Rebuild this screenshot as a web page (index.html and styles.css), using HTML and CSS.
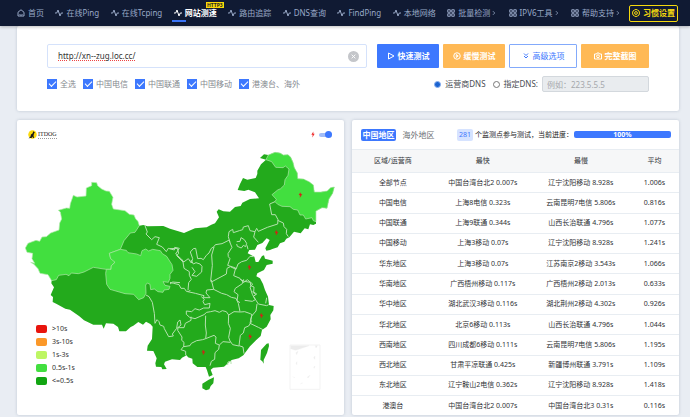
FILE: index.html
```html
<!DOCTYPE html>
<html lang="zh-CN">
<head>
<meta charset="utf-8">
<title>网站测速 - ITDOG</title>
<link rel="stylesheet" href="styles.css">
</head>
<body>
<svg class="defs" aria-hidden="true">
  <symbol id="home" viewBox="0 0 16 16"><path d="M2 6.5 8 1.500l6 5V14H2zM5 11c1.500 1.500 4.500 1.500 6 0"/></symbol>
  <symbol id="pulse" viewBox="0 0 16 16"><path d="M0 8h3.500L6 2l4 12 2.500-6H16"/></symbol>
  <symbol id="grid" viewBox="0 0 16 16"><path d="M1.500 1.500h5v5h-5zM9.500 1.500h5v5h-5zM1.500 9.500h5v5h-5zM9.500 9.500h5v5h-5z"/></symbol>
  <symbol id="chevron" viewBox="0 0 16 16"><path d="m5 3 5 5-5 5"/></symbol>
  <symbol id="gear" viewBox="0 0 16 16"><path d="M5 2 8 .8 11 2l3 2 1 4-1 4-3 2-3 1.200L5 14l-3-2-1-4 1-4z"/><circle cx="8" cy="8" r="2.800"/></symbol>
  <symbol id="bolt" viewBox="0 0 12 18"><path d="M7 0 1 10h4l-1 8 7-11H7z"/></symbol>
</svg>

<header class="topbar">
  <nav class="nav">
    <a href="#"><svg class="icon"><use href="#home"/></svg>首页</a>
    <a href="#"><svg class="icon"><use href="#pulse"/></svg>在线Ping</a>
    <a href="#"><svg class="icon"><use href="#pulse"/></svg>在线Tcping</a>
    <a href="#" class="active"><svg class="icon"><use href="#pulse"/></svg>网站测速<span class="tag">HTTP3</span></a>
    <a href="#"><svg class="icon"><use href="#pulse"/></svg>路由追踪</a>
    <a href="#"><svg class="icon"><use href="#pulse"/></svg>DNS查询</a>
    <a href="#"><svg class="icon"><use href="#pulse"/></svg>FindPing</a>
    <a href="#"><svg class="icon"><use href="#pulse"/></svg>本地网络</a>
    <a href="#"><svg class="icon"><use href="#grid"/></svg>批量检测<svg class="icon small"><use href="#chevron"/></svg></a>
    <a href="#"><svg class="icon"><use href="#grid"/></svg>IPV6工具<svg class="icon small"><use href="#chevron"/></svg></a>
    <a href="#"><svg class="icon"><use href="#grid"/></svg>帮助支持<svg class="icon small"><use href="#chevron"/></svg></a>
  </nav>
  <button class="settings" type="button"><svg class="icon"><use href="#gear"/></svg>习惯设置</button>
</header>

<main class="page">
  <form class="card query">
    <div class="row">
      <div class="url">
        <input type="text" aria-label="网址" value="http://xn--zug.loc.cc/" spellcheck="false">
        <button class="clear" type="button" aria-label="清空"><svg viewBox="0 0 12 12"><circle cx="6" cy="6" r="6"/><path d="m4 4 4 4m0-4-4 4"/></svg></button>
      </div>
      <div class="actions">
        <button class="btn blue" type="button"><svg class="icon" viewBox="0 0 16 16"><path d="M3 2v12l11-6z"/></svg>快速测试</button>
        <button class="btn orange" type="button"><svg class="icon" viewBox="0 0 16 16"><circle cx="8" cy="8" r="6.500"/><path d="M6.500 5v6l4-3z"/></svg>缓慢测试</button>
        <button class="btn outline wide" type="button"><svg class="icon" viewBox="0 0 16 16"><path d="m4 3 4 4 4-4M4 8l4 4 4-4"/></svg>高级选项</button>
        <button class="btn orange wide" type="button"><svg class="icon" viewBox="0 0 16 16"><path d="M1 4h4l1-2h4l1 2h4v10H1z"/><circle cx="8" cy="8.500" r="2.800"/></svg>完整截图</button>
      </div>
    </div>
    <div class="row options">
      <div class="checks">
        <label><input type="checkbox" checked>全选</label>
        <label><input type="checkbox" checked>中国电信</label>
        <label><input type="checkbox" checked>中国联通</label>
        <label><input type="checkbox" checked>中国移动</label>
        <label><input type="checkbox" checked>港澳台、海外</label>
      </div>
      <div class="dns">
        <label><input type="radio" name="dns" checked>运营商DNS</label>
        <label><input type="radio" name="dns">指定DNS:</label>
        <input class="dns-ip" type="text" aria-label="DNS地址" placeholder="例如：223.5.5.5" disabled>
      </div>
    </div>
  </form>

  <div class="results">
    <section class="card map-card">
      <div class="map-head">
        <div class="logo">
          <svg viewBox="0 0 18 18"><circle cx="9" cy="9" r="8.500" fill="#fbd90b"/><path d="M11 2l1 2 2 1-2 2-1 4 1 5h-2l-1-3-2 3H4l-3 1 4-4 1-4 3-2z" fill="#191919"/></svg>
          <span>ITDOG</span>
        </div>
        <div class="live">
          <svg class="bolt"><use href="#bolt"/></svg>
          <input type="checkbox" role="switch" aria-label="实时标记" checked>
        </div>
      </div>
      <svg class="map" viewBox="21 15 981 885" role="img" aria-label="中国地图">
        <path class="fast" d="M388 332 400 330 412 334 460 333 480 341 510 350 522 354 555 340 590 337 604 329 615 325 627 307 620 290 626 283 640 289 660 290 675 276 692 273 697 263 720 252 747 250 735 232 715 224 703 228 683 225 690 207 699 189 712 194 737 189 742 177 742 167 753 148 768 134 750 129 762 118 775 120 795 112 810 114 820 120 834 119 842 127 849 142 853 158 862 174 863 191 880 192 897 200 910 210 913 231 933 231 952 228 962 218 973 216 968 235 957 252 951 280 936 278 918 288 918 326 910 330 900 328 895 343 884 340 872 355 852 350 838 367 829 371 823 380 810 385 803 397 787 402 780 405 769 407 766 400 779 375 770 370 757 384 742 390 735 404 718 405 713 415 733 425 737 441 745 441 756 423 762 421 765 431 780 435 788 437 788 446 770 450 762 465 742 475 739 484 750 490 759 507 765 525 774 545 777 570 791 573 790 586 781 600 782 613 770 635 756 645 752 663 738 676 720 694 700 721 686 730 665 735 642 755 610 758 602 764 608 780 597 785 591 766 587 756 562 756 548 745 547 731 534 727 530 721 516 728 510 735 486 733 465 740 462 748 470 762 457 763 454 756 438 755 436 745 440 730 430 708 411 707 413 692 426 672 428 635 421 627 408 620 399 629 385 621 370 632 362 636 348 649 328 649 324 636 310 626 288 625 281 641 276 629 250 629 222 616 208 604 180 584 166 581 140 567 128 561 129 546 122 540 132 517 124 505 125 497 145 480 250 450 300 400Z"/>
        <path class="mid" d="M245 202 260 203 263 212 275 222 288 228 298 229 309 247 305 268 310 282 345 287 358 298 372 300 377 312 384 319 388 332 375 352 361 354 342 377 331 403 298 415 302 431 310 434 315 442 304 452 303 463 288 463 250 457 222 471 205 476 184 474 177 482 168 478 146 481 139 494 125 497 114 479 90 475 84 461 71 447 62 442 74 445 66 431 68 415 51 412 46 399 54 385 78 376 89 379 96 366 109 365 122 354 147 345 149 324 155 312 151 291 145 286 169 279 179 280 181 266 190 241 201 246 228 243 229 219 245 212Z"/>
        <path class="mid" d="M331 403 349 406 354 413 380 417 392 422 396 407 407 402 416 408 428 403 451 407 457 416 470 424 486 449 489 466 480 478 480 490 475 502 459 500 465 511 480 514 477 523 462 525 459 532 444 530 433 522 422 524 420 508 412 504 407 510 408 535 401 548 386 554 371 538 345 536 300 523 290 508 287 475 289 463 303 463 304 452 315 442 302 431 298 415Z"/>
        <path class="mid" d="M768 134 775 120 795 112 810 114 820 120 834 119 842 127 849 142 853 158 862 174 863 191 880 192 897 200 910 210 913 231 933 231 952 228 962 218 973 216 968 235 957 252 951 280 936 278 918 288 918 320 910 317 906 308 887 312 880 300 870 300 863 285 850 283 840 275 816 274 803 268 795 260 799 253 786 239 803 225 812 221 823 210 825 194 834 181 837 162 826 153 819 158 797 157 785 140Z"/>
        <path class="fast" d="M596 794 612 787 610 805 602 813 598 823 588 826 577 820 577 806ZM770 686 776 685 777 693 771 714 761 735 761 746 757 739 751 734 753 705Z"/>
        <g class="lines">
          <path d="M405 332 412 351 408 357 425 374 435 365 448 368 440 388 457 396 469 410 475 400 493 405 494 397 508 400 497 417 515 433 521 441 535 431 544 444 548 431 541 411 550 401 557 400 563 431 573 430 580 434 589 421 597 414 604 400 612 395 616 389 636 386 658 375 660 383 655 365 657 350 668 343 670 353 688 347 698 344 700 336 715 332 720 347 735 350 731 366 745 382M735 350 740 340 745 349 772 337 803 327 804 314 796 299 785 299 779 267 795 260M803 316 820 324 822 335 830 343 829 356 835 365"/>
          <path d="M680 380 690 379 693 368 703 374 710 385 707 395 700 391 694 399 682 394 680 387M711 391 714 403M660 383 666 397 654 416 655 425 660 431 653 451M480 401 502 400 506 415 500 422 519 441 522 460 538 470 538 481 544 493 536 503 534 526M612 396 605 420 607 451 602 497 604 501 649 477 651 460 661 455 678 463 684 447 695 440 710 436 720 424 731 425M653 451 677 459 671 482 690 490 700 503 712 494 728 507 720 516 727 538 736 554 727 559 704 556"/>
          <path d="M604 495 611 523 635 535 650 539 664 547 678 550 685 565 690 590M701 493 697 506 676 520 672 530 684 539 681 557 690 563M690 493 703 499 721 502 722 512 732 516 731 531 740 537 730 544 738 556 745 567 770 572 776 569M741 567 738 588 725 603 720 625 745 637 759 644M770 548 767 565M611 523 590 525 588 534 600 548 580 548 582 542 556 535 529 529 523 520 513 520 507 509 491 505 480 502"/>
          <path d="M541 525 535 531M574 545 583 553 579 560 584 569 600 565 598 579 581 579 568 585 561 583 555 581 545 590 529 588 529 598 539 607 555 611 582 599 590 592 602 590 615 587 628 592 637 587 649 590 656 600 672 590 691 591 704 590 721 596 726 599 722 615 725 619 716 633 704 638 700 654 691 661 687 692 699 696 702 716M656 600 655 625 661 640 656 667 660 678 668 689 687 693M587 602 586 630 589 654 587 671 578 674 560 677 544 685 540 692 521 695 522 682 515 676 516 666 503 646 504 638 522 638 526 625 543 616 543 605"/>
          <path d="M510 615 503 621 500 640 487 657 490 663 476 665 463 641 461 634 450 630 447 620 441 614 435 625 433 595 427 562 417 545 408 540M587 671 612 661 618 666 616 685 628 690 639 680 661 682M628 690 626 703 615 713 614 733 604 739 600 752M543 435 550 447 558 443 570 447 576 454 575 471 560 484 546 481 555 470 546 457M521 441 515 433M480 507 488 501 510 503M521 694 513 704 527 709 527 721M510 615 513 630 501 640M653 750 654 741 663 739 663 747M727 530 737 539"/>
        </g>
        <g class="marks"><path d="m871 233-4 7h4l-1 7 6-9h-4zM799 346l-4 7h4l-1 7 6-9h-4zM718 450l-4 7h4l-1 7 6-9h-4zM754 595l-4 7h4l-1 7 6-9h-4zM720 658l-4 7h4l-1 7 6-9h-4zM580 705l-4 7h4l-1 7 6-9h-4z"/></g>
        <path class="inset-box" d="M840 690h90v133h-90z"/>
        <path class="inset" d="M842 692h55l-22 8-18 6-15-5zM916 692h6l-4 7zM858 713l6-4-4 10zM911 728l4-5-1 10zM858 744l3-4-1 9zM911 756l4-3-2 7zM892 786l8-5-6 8zM850 785l4 4zM872 806l6-2z"/>
      </svg>
      <ul class="legend">
        <li><i class="c1"></i>&gt;10s</li>
        <li><i class="c2"></i>3s-10s</li>
        <li><i class="c3"></i>1s-3s</li>
        <li><i class="c4"></i>0.5s-1s</li>
        <li><i class="c5"></i>&lt;=0.5s</li>
      </ul>
    </section>

    <section class="card stats">
      <div class="stats-head">
        <button class="tab on" type="button">中国地区</button>
        <button class="tab" type="button">海外地区</button>
        <div class="summary">
          <span class="count">281</span>
          <span>个监测点参与测试，当前进度：</span>
        </div>
        <div class="progress" role="progressbar" aria-valuenow="100">100%</div>
      </div>
      <div class="table-wrap">
        <table>
          <thead><tr><th class="w25">区域/运营商</th><th class="w30">最快</th><th class="w30">最慢</th><th>平均</th></tr></thead>
          <tbody>
            <tr><td>全部节点</td><td>中国台湾台北2 0.007s</td><td>辽宁沈阳移动 8.928s</td><td>1.006s</td></tr>
            <tr><td>中国电信</td><td>上海8电信 0.323s</td><td>云南昆明7电信 5.806s</td><td>0.816s</td></tr>
            <tr><td>中国联通</td><td>上海9联通 0.344s</td><td>山西长治联通 4.796s</td><td>1.077s</td></tr>
            <tr><td>中国移动</td><td>上海3移动 0.07s</td><td>辽宁沈阳移动 8.928s</td><td>1.241s</td></tr>
            <tr><td>华东地区</td><td>上海3移动 0.07s</td><td>江苏南京2移动 3.543s</td><td>1.066s</td></tr>
            <tr><td>华南地区</td><td>广西梧州移动 0.117s</td><td>广西梧州2移动 2.013s</td><td>0.633s</td></tr>
            <tr><td>华中地区</td><td>湖北武汉3移动 0.116s</td><td>湖北荆州2移动 4.302s</td><td>0.926s</td></tr>
            <tr><td>华北地区</td><td>北京6移动 0.113s</td><td>山西长治联通 4.796s</td><td>1.044s</td></tr>
            <tr><td>西南地区</td><td>四川成都6移动 0.111s</td><td>云南昆明7电信 5.806s</td><td>1.195s</td></tr>
            <tr><td>西北地区</td><td>甘肃平凉联通 0.425s</td><td>新疆博州联通 3.791s</td><td>1.109s</td></tr>
            <tr><td>东北地区</td><td>辽宁鞍山2电信 0.362s</td><td>辽宁沈阳移动 8.928s</td><td>1.418s</td></tr>
            <tr><td>港澳台</td><td>中国台湾台北2 0.007s</td><td>中国台湾台北3 0.31s</td><td>0.116s</td></tr>
          </tbody>
        </table>
      </div>
    </section>
  </div>
</main>
</body>
</html>
```
FILE: styles.css
```css
* { box-sizing: border-box; }
body {
  margin: 0;
  background: #e9edf3;
  color: #4a4d52;
  font: 8px/12px "Noto Sans", "Noto Sans CJK SC", sans-serif;
}
button, input { font: inherit; margin: 0; }
button { cursor: pointer; padding: 0; }
.defs { position: absolute; width: 0; height: 0; }
.icon {
  width: 8px;
  height: 8px;
  flex: none;
  fill: none;
  stroke: currentColor;
  stroke-width: 2;
}
.icon.small { width: 6px; height: 6px; margin-left: -2px; }

.topbar {
  position: relative;
  display: flex;
  justify-content: space-between;
  align-items: center;
  height: 26px;
  padding: 0 12px 0 17px;
  background: #101a33;
  box-shadow: 0 1px 3px rgba(0, 0, 0, .25);
}
.nav {
  display: flex;
  flex: 1;
  justify-content: space-between;
  align-items: center;
  height: 100%;
  margin-right: 8px;
}
.nav a {
  position: relative;
  display: flex;
  align-items: center;
  gap: 3px;
  height: 100%;
  color: #99a9c7;
  text-decoration: none;
  white-space: nowrap;
}
.nav a.active { color: #fff; font-weight: 700; }
.nav a.active::after {
  content: "";
  position: absolute;
  left: -2px;
  bottom: 4px;
  width: 14px;
  height: 2px;
  background: #3973f5;
}
.tag {
  position: absolute;
  right: -7px;
  top: 2px;
  background: #f9d90a;
  color: #222;
  font-size: 5px;
  line-height: 6px;
  padding: 0 1px;
}
.settings {
  display: flex;
  align-items: center;
  justify-content: center;
  gap: 3px;
  width: 49px;
  height: 17px;
  background: transparent;
  border: 1px solid #f5d80e;
  border-radius: 2px;
  color: #f5d80e;
  font-weight: 700;
  white-space: nowrap;
}

.page { padding: 0 11px 2px 17px; }
.card {
  background: #fff;
  border-radius: 2px;
  box-shadow: 0 0 3px rgba(60, 80, 110, .25);
}
.query { padding: 18px 30px 19px; }
.row { display: flex; align-items: center; gap: 10px; }
.url {
  display: flex;
  align-items: center;
  flex: 1;
  height: 24px;
  padding: 0 7px 0 10px;
  border: 1px solid #d5e2fb;
  border-radius: 2px;
}
.url input {
  flex: 1;
  min-width: 0;
  padding: 0;
  border: 0;
  outline: 0;
  background: none;
  color: #333;
  font-size: 8px;
  text-decoration: underline dotted #ee4444 1px;
}
.clear { display: flex; width: 11px; height: 11px; border: 0; background: none; }
.clear svg { width: 11px; height: 11px; fill: #c4c6ca; stroke: none; }
.clear path { stroke: #fff; }
.actions { display: flex; gap: 4px; }
.btn {
  display: flex;
  align-items: center;
  justify-content: center;
  gap: 3px;
  width: 62px;
  height: 24px;
  border: 1px solid transparent;
  border-radius: 1px;
  color: #fff;
  font-weight: 700;
}
.wide { width: 68px; }
.blue { background: #3d78fe; }
.orange { background: #ffb955; }
.outline { background: #fff; border-color: #83aafb; color: #3d78fe; font-weight: 400; }
.options { justify-content: space-between; margin-top: 8px; }
.checks, .dns { display: flex; align-items: center; gap: 7px; }
.checks label, .dns label { display: flex; align-items: center; gap: 3px; white-space: nowrap; }
.checks { color: #85898f; }
.checks input {
  appearance: none;
  display: grid;
  place-items: center;
  width: 10px;
  height: 10px;
  background: #3d78fe;
}
.checks input::after {
  content: "";
  width: 6px;
  height: 3px;
  border: solid #fff;
  border-width: 0 0 1px 1px;
  transform: translateY(-1px) rotate(-45deg);
}
.dns label { gap: 4px; }
.dns label input {
  appearance: none;
  width: 7px;
  height: 7px;
  border: 1px solid #777;
  border-radius: 50%;
}
.dns label input:checked { border-color: #8ab0ef; background: #1b63d0; }
.dns .dns-ip {
  width: 107px;
  height: 16px;
  margin-left: -3px;
  padding: 0 4px;
  border: 1px solid #d3d8dd;
  border-radius: 2px;
  background: #e9ecef;
}
.dns-ip::placeholder { color: #a5a8ac; }

.results {
  display: grid;
  grid-template-columns: 1fr 1fr;
  gap: 8px;
  margin-top: 9px;
}
.map-card { position: relative; }
.map { display: block; width: 100%; }
.map-head {
  position: absolute;
  inset: 10px 12px auto 11px;
  display: flex;
  justify-content: space-between;
  align-items: center;
}
.logo { display: flex; align-items: center; gap: 1px; }
.logo svg { width: 9px; height: 9px; }
.logo span {
  color: #222;
  font: 6px/8px "Liberation Serif", serif;
  border-bottom: 1px dotted #999;
}
.live { display: flex; align-items: center; gap: 4px; }
.bolt { width: 4px; height: 7px; fill: #ee2929; }
.live input {
  appearance: none;
  display: flex;
  align-items: center;
  justify-content: flex-end;
  width: 13px;
  height: 4px;
  border-radius: 2px;
  background: #a2bdf8;
}
.live input::after {
  content: "";
  width: 7px;
  height: 7px;
  border-radius: 50%;
  background: #3d78fe;
}
.fast { fill: #23aa1c; }
.mid { fill: #42df3f; }
.mid { stroke: #b4e8ad; stroke-width: 2; }
.lines { fill: none; stroke: #b4e2ae; stroke-width: 3; stroke-linejoin: round; }
.marks { fill: #e31616; stroke: #e31616; }
.inset-box { fill: none; stroke: #f3f3f3; stroke-width: 3; }
.inset { fill: #ececec; stroke: #ececec; }
.legend {
  position: absolute;
  left: 19px;
  bottom: 28px;
  margin: 0;
  padding: 0;
  list-style: none;
  font-size: 7px;
  line-height: 13px;
  color: #333;
}
.legend li { display: flex; align-items: center; gap: 5px; }
.legend i { width: 11px; height: 8px; border-radius: 2px; }
.c1 { background: #e8140d; }
.c2 { background: #fb9829; }
.c3 { background: #bdf663; }
.c4 { background: #42df3f; }
.c5 { background: #12a512; }

.stats { display: flex; flex-direction: column; overflow: hidden; }
.stats-head {
  display: flex;
  align-items: center;
  height: 29px;
  padding: 0 8px 0 9px;
  white-space: nowrap;
}
.tab { border: 0; border-radius: 2px; background: none; color: #6b6e73; width: 35px; height: 12px; }
.tab + .tab { margin-left: 5px; }
.tab.on { background: #3d78fe; color: #fff; font-weight: 700; }
.summary {
  display: flex;
  align-items: center;
  gap: 2px;
  margin: 0 1px 0 auto;
  font-size: 6px;
  color: #222;
}
.summary { font-size: 7px; }
.count { padding: 0 2px; border-radius: 2px; background: #d6e3ff; color: #3d78fe; }
.progress {
  width: 97px;
  height: 7px;
  border-radius: 2px;
  background: #3d78fe;
  color: #fff;
  font-size: 7px;
  line-height: 7px;
  font-weight: 700;
  text-align: center;
}
.table-wrap { display: grid; flex: 1; }
table {
  width: 100%;
  height: 100%;
  border-collapse: collapse;
  table-layout: fixed;
  text-align: center;
  color: #303236;
  font-size: 7px;
  line-height: 10px;
}
th, td { padding: 0; white-space: nowrap; }
th { height: 23px; font-weight: 400; background: #f6f7f8; border-top: 1px solid #e8edf2; }
td { border-top: 1px solid #e8edf2; }
.w25 { width: 25%; }
.w30 { width: 30%; }
```
